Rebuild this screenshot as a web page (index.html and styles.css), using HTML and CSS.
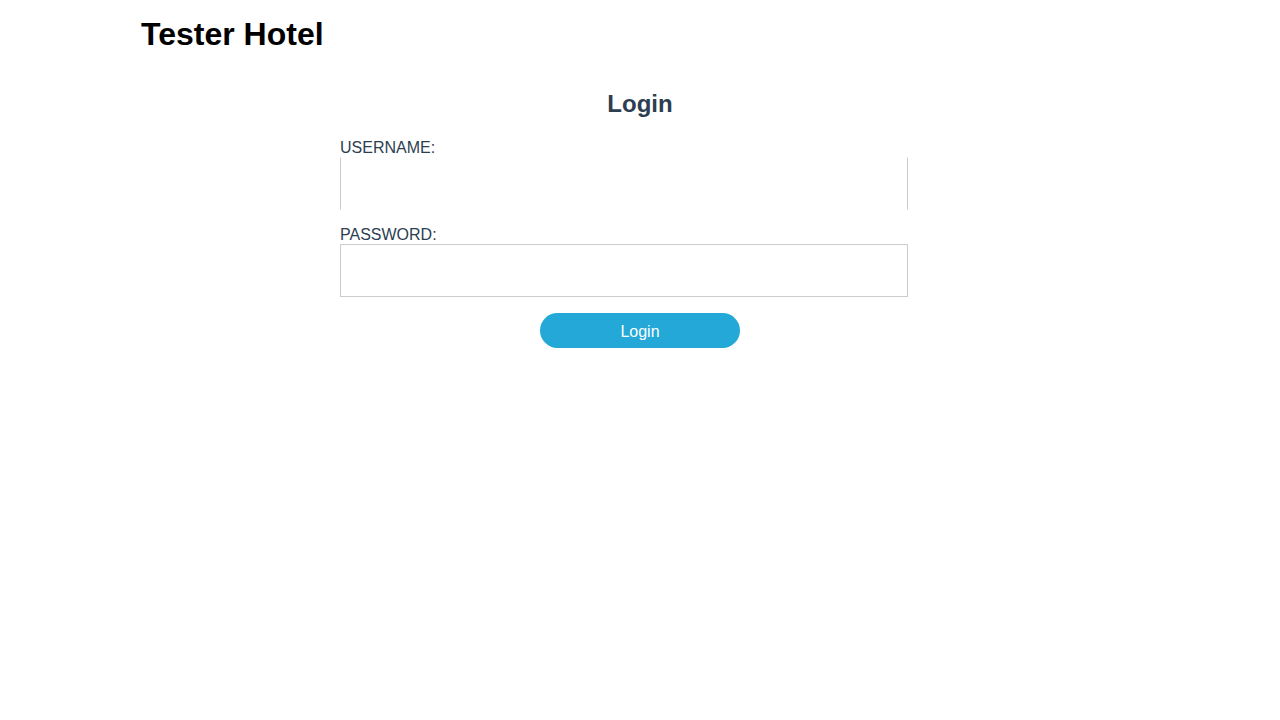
FILE: index.html
```html
<!DOCTYPE html>
<html lang="en">
<head>
<meta charset="utf-8">
<title>Tester Hotel</title>
<link rel="stylesheet" href="styles.css">
</head>
<body>
  <header class="header">
    <h1 class="brand">Tester Hotel</h1>
  </header>
  <main class="login">
    <h2 class="login-title">Login</h2>
    <form class="login-form">
      <label class="field-label" for="username">USERNAME:</label>
      <input class="field-input field-input--active" id="username" type="text">
      <label class="field-label" for="password">PASSWORD:</label>
      <input class="field-input" id="password" type="password">
      <div class="actions">
        <button class="btn" type="button">Login</button>
      </div>
    </form>
  </main>
</body>
</html>
```
FILE: styles.css
```css
* { box-sizing: border-box; }
html, body { margin: 0; padding: 0; background: #fff; }
body {
  font-family: "Liberation Sans", Arial, sans-serif;
  color: #2c3e50;
}
.header {
  width: 1000px;
  margin: 0 auto;
  padding-top: 16px;
  padding-left: 1px;
}
.brand {
  margin: 0;
  font-size: 32px;
  line-height: 37px;
  font-weight: bold;
  color: #000;
}
.login {
  width: 600px;
  margin: 37px auto 0;
}
.login-title {
  margin: 0;
  text-align: center;
  font-size: 24px;
  line-height: 28px;
  font-weight: bold;
  color: #2c3e50;
}
.login-form {
  margin-top: 21px;
  display: flex;
  flex-direction: column;
}
.field-label {
  font-size: 16px;
  line-height: 18px;
  color: #2c3e50;
}
.field-input {
  width: 568px;
  height: 53px;
  margin: 0 0 16px;
  border: 1px solid #cccccc;
  border-radius: 0;
  outline: none;
  padding: 0 8px;
  font-size: 16px;
  background: #fff;
}
.field-input--active {
  border-top-color: #fff;
  border-bottom-color: #fff;
}
.actions {
  display: flex;
  justify-content: center;
}
.btn {
  width: 200px;
  height: 35px;
  padding: 2px 0 0;
  border: none;
  border-radius: 18px;
  background: #23a8d8;
  color: #fff;
  font-family: "Liberation Sans", Arial, sans-serif;
  font-size: 16px;
  cursor: pointer;
}
```
